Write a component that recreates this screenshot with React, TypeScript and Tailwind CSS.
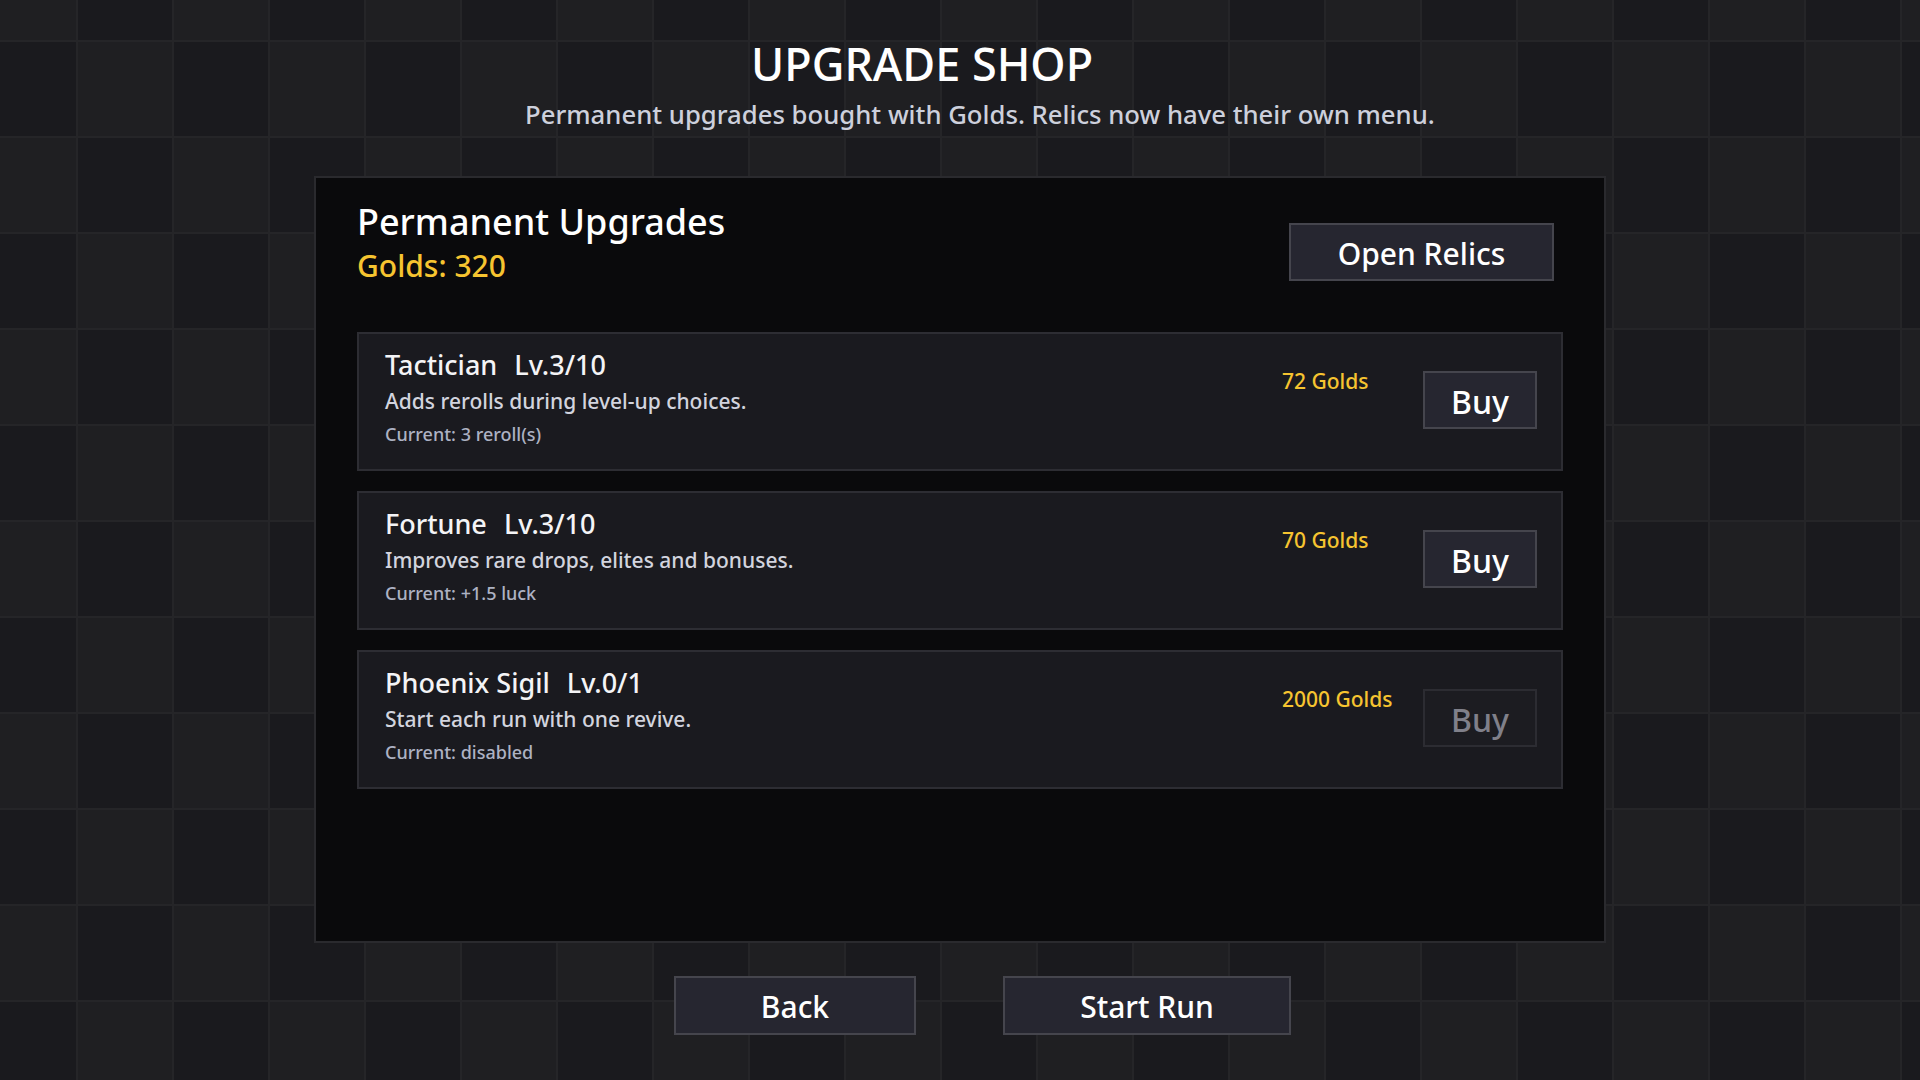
type Upgrade = {
  name: string;
  level: string;
  description: string;
  current: string;
  cost: number;
  canBuy: boolean;
};

const upgrades: Upgrade[] = [
  {
    name: 'Tactician',
    level: 'Lv.3/10',
    description: 'Adds rerolls during level-up choices.',
    current: 'Current: 3 reroll(s)',
    cost: 72,
    canBuy: true,
  },
  {
    name: 'Fortune',
    level: 'Lv.3/10',
    description: 'Improves rare drops, elites and bonuses.',
    current: 'Current: +1.5 luck',
    cost: 70,
    canBuy: true,
  },
  {
    name: 'Phoenix Sigil',
    level: 'Lv.0/1',
    description: 'Start each run with one revive.',
    current: 'Current: disabled',
    cost: 2000,
    canBuy: false,
  },
];

function MenuButton({ label, className }: { label: string; className?: string }) {
  return (
    <button
      type="button"
      className={`flex items-center justify-center border-2 border-[#45454d] bg-[#262630] pt-0.5 text-[30px] text-white ${className ?? ''}`}
    >
      {label}
    </button>
  );
}

function UpgradeRow({ upgrade }: { upgrade: Upgrade }) {
  return (
    <div className="flex h-[139px] border-2 border-[#2d2d33] bg-[#1a1a1f]">
      <div className="flex flex-1 flex-col pl-[26px] pt-[11px]">
        <div className="text-[27px] text-[#f4f4f6]">
          {upgrade.name}
          <span className="ml-[17px]">{upgrade.level}</span>
        </div>
        <div className="text-[21px] text-[#d2d4de]">{upgrade.description}</div>
        <div className="mt-[4px] text-[18px] text-[#adb2c3]">{upgrade.current}</div>
      </div>
      <div className="w-[141px] pt-8 text-[21px] text-[#f6c430]">{upgrade.cost} Golds</div>
      <div className="mr-[24px] pt-[37px]">
        <button
          type="button"
          disabled={!upgrade.canBuy}
          className={
            upgrade.canBuy
              ? 'flex h-[58px] w-[114px] items-center justify-center border-2 border-[#45454d] bg-[#262630] pt-1 text-[32px] text-white'
              : 'flex h-[58px] w-[114px] items-center justify-center border-2 border-[#2c2c32] bg-[#1c1c21] pt-1 text-[32px] text-[#80808a]'
          }
        >
          Buy
        </button>
      </div>
    </div>
  );
}

export default function App() {
  return (
    <div
      className="flex h-[1080px] w-full flex-col items-center overflow-hidden font-['Noto_Sans','Open_Sans',sans-serif] font-medium [background:linear-gradient(to_right,#252528_0_2px,transparent_2px)_76px_0/96px_96px,linear-gradient(to_bottom,#252528_0_2px,transparent_2px)_0_40px/96px_96px,repeating-conic-gradient(#1a1a1e_0_25%,#1f1f22_0_50%)_77px_41px/192px_192px]"
    >
      <h1 className="mt-[30px] ml-[751px] self-start text-[45px] text-white">UPGRADE SHOP</h1>
      <p className="-mt-0.5 ml-[525px] self-start text-[25.7px] text-[#cdd0dc]">
        Permanent upgrades bought with Golds. Relics now have their own menu.
      </p>

      <div className="mt-[42px] flex h-[767px] w-[1292px] flex-col border-2 border-[#2a2a2e] bg-[#0a0a0c] px-[41px] pt-[17px]">
        <div className="flex items-start justify-between">
          <div>
            <div className="text-[36px] text-white">Permanent Upgrades</div>
            <div className="-mt-1.5 text-[30px] text-[#f6c430]">Golds: 320</div>
          </div>
          <MenuButton label="Open Relics" className="mr-[9px] mt-[28px] h-[58px] w-[265px]" />
        </div>

        <div className="mt-[44px] flex flex-col gap-5">
          {upgrades.map((u) => (
            <UpgradeRow key={u.name} upgrade={u} />
          ))}
        </div>
      </div>

      <div className="ml-[45px] mt-[33px] flex gap-[87px]">
        <MenuButton label="Back" className="h-[59px] w-[242px]" />
        <MenuButton label="Start Run" className="h-[59px] w-[288px]" />
      </div>
    </div>
  );
}
